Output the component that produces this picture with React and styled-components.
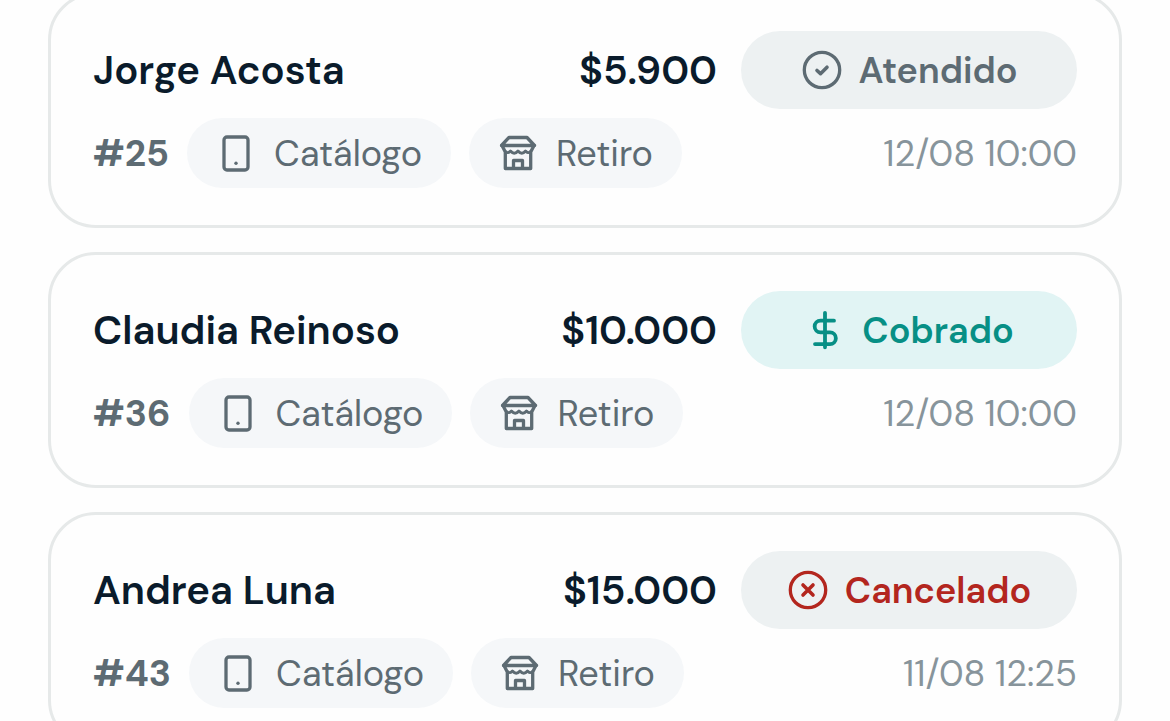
import React from "react";
import styled, { createGlobalStyle } from "styled-components";

const GlobalStyle = createGlobalStyle`
  * {
    box-sizing: border-box;
  }
  body {
    margin: 0;
    background: #fefefe;
    font-family: "DM Sans", Inter, "Liberation Sans", sans-serif;
    font-optical-sizing: none;
    overflow: hidden;
  }
`;

const OrderList = styled.ul`
  display: flex;
  flex-direction: column;
  gap: 24px;
  margin: -8px 0 0;
  padding: 0 48px;
  list-style: none;
`;
const Card = styled.li`
  display: flex;
  flex-direction: column;
  gap: 9px;
  padding: 36px 42px 37px;
  border: 3px solid #e6e9e9;
  border-radius: 48px;
  background: #fefefe;
`;
const Row = styled.div`
  display: flex;
  align-items: center;
  gap: ${({ $gap }) => $gap}px;
`;
const Name = styled.h2`
  flex: 1;
  margin: 0;
  color: #0a1b2b;
  font-weight: 600;
  font-size: 40px;
  line-height: 48px;
`;
const Price = styled.span`
  color: #0a1b2b;
  font-weight: 600;
  font-size: 40px;
  line-height: 48px;
`;
const Status = styled.span`
  display: flex;
  align-items: center;
  justify-content: center;
  gap: 16px;
  width: 336px;
  height: 78px;
  border-radius: 39px;
  background: ${({ $paid }) => ($paid ? "#e1f4f4" : "#edf1f2")};
  color: ${({ $color }) => $color};
  font-weight: 600;
  font-size: 36px;
  line-height: 47px;
`;
const Number = styled.span`
  color: #5d6b73;
  font-weight: 700;
  font-size: 37px;
  line-height: 47px;
`;
const Tag = styled.span`
  display: flex;
  align-items: center;
  gap: 17px;
  height: 70px;
  padding: 0 29px 0 28px;
  border-radius: 35px;
  background: #f5f7f9;
  color: #5d6b73;
  font-size: 36px;
  line-height: 47px;
`;
const DateTime = styled.time`
  margin-left: auto;
  color: #87949b;
  font-size: 36px;
  line-height: 47px;
`;
const Svg = styled.svg`
  flex: none;
  width: 42px;
  height: 42px;
  fill: none;
  stroke: currentColor;
  stroke-width: 3.3;
  stroke-linecap: round;
  stroke-linejoin: round;
`;

function Icon({ children }) {
  return (
    <Svg viewBox="0 0 42 42" aria-hidden="true">
      {children}
    </Svg>
  );
}

const PhoneIcon = () => (
  <Icon>
    <rect x="9" y="5" width="24" height="33" rx="3" />
    <circle cx="21" cy="31.3" r="1.7" fill="currentColor" stroke="none" />
  </Icon>
);
const StoreIcon = () => (
  <Icon>
    <path d="M12 5.500h18l7.500 8h-33z" />
    <path d="M5 13.500L8.300 20V36.500h25.400V20L37 13.500" />
    <path
      d="M8.500 19.500q2.500 2.500 5-.5 3.750 4.500 7.500 0 3.750 4.500 7.500 0 2.500 3 5 .5"
      strokeWidth="2.8"
    />
    <path d="M16.500 36v-7.500h9V36" />
  </Icon>
);
const CheckIcon = () => (
  <Icon>
    <circle cx="21" cy="21" r="17.7" />
    <path d="M16 21.500l3.500 3.200 6.500-6.500" strokeWidth="3.6" />
  </Icon>
);
const DollarIcon = () => (
  <Icon>
    <path
      d="M21 3.800v34.500M30 11.700H16.500a5.850 5.850 0 0 0 0 11.700h9.500a5.850 5.850 0 0 1 0 11.700H11"
      strokeWidth="3.8"
    />
  </Icon>
);
const CancelIcon = () => (
  <Icon>
    <circle cx="21" cy="21" r="17.7" />
    <path d="M16 16l10 10M26 16l-10 10" strokeWidth="3.6" />
  </Icon>
);

const STATUS = {
  attended: { label: "Atendido", color: "#5d6b73", icon: <CheckIcon /> },
  paid: { label: "Cobrado", color: "#078f85", icon: <DollarIcon /> },
  canceled: { label: "Cancelado", color: "#b3261e", icon: <CancelIcon /> },
};

const orders = [
  { id: 25, name: "Jorge Acosta", price: "$5.900", status: "attended", date: "12/08 10:00" },
  { id: 36, name: "Claudia Reinoso", price: "$10.000", status: "paid", date: "12/08 10:00" },
  { id: 43, name: "Andrea Luna", price: "$15.000", status: "canceled", date: "11/08 12:25" },
];

function OrderCard({ order }) {
  const status = STATUS[order.status];
  return (
    <Card>
      <Row $gap={24}>
        <Name>{order.name}</Name>
        <Price>{order.price}</Price>
        <Status $paid={order.status === "paid"} $color={status.color}>
          {status.icon}
          {status.label}
        </Status>
      </Row>
      <Row $gap={18}>
        <Number>#{order.id}</Number>
        <Tag>
          <PhoneIcon />
          Catálogo
        </Tag>
        <Tag>
          <StoreIcon />
          Retiro
        </Tag>
        <DateTime>{order.date}</DateTime>
      </Row>
    </Card>
  );
}

function App() {
  return (
    <>
      <GlobalStyle />
      <OrderList>
        {orders.map((order) => (
          <OrderCard key={order.id} order={order} />
        ))}
      </OrderList>
    </>
  );
}

export default App;
